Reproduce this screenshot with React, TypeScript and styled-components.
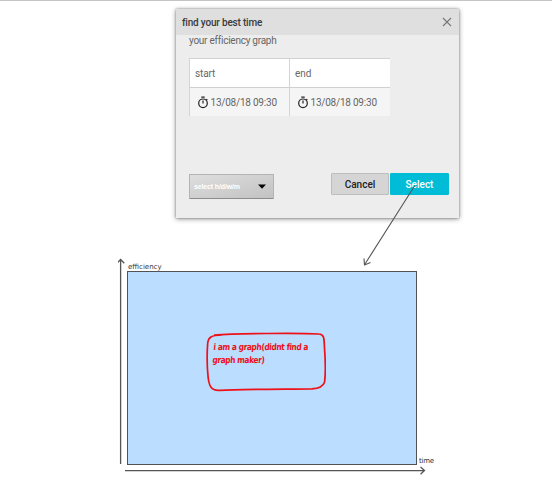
import React from 'react';
import styled, { createGlobalStyle } from 'styled-components';

const GlobalStyle = createGlobalStyle`
  * { box-sizing: border-box; }
  body { margin: 0; background: #fff; }
`;

const Page = styled.main`
  position: relative;
  width: 552px;
  height: 500px;
  overflow: hidden;
  border-top: 1px solid #c4c4c4;
  background: #fff;
  font-family: Roboto, sans-serif;
`;

const Dialog = styled.section`
  width: 283px;
  height: 209px;
  margin: 8px 0 0 176px;
  background: #ededed;
  box-shadow: 0 0 2px rgba(0, 0, 0, 0.35), 0 1px 5px rgba(0, 0, 0, 0.42);
`;

const DialogHeader = styled.header`
  display: flex;
  align-items: center;
  justify-content: space-between;
  height: 26px;
  padding: 0 7px 0 6px;
  background: #dfdfdf;
`;

const Title = styled.h1`
  margin: 1px 0 0;
  font-size: 10px;
  line-height: 14px;
  font-weight: 500;
  letter-spacing: -0.19px;
  color: #3a3a3a;
`;

const CloseButton = styled.button`
  display: flex;
  padding: 0;
  border: 0;
  background: none;
`;

const DialogBody = styled.div`
  padding: 0 10px 0 13px;
`;

const Subtitle = styled.p`
  margin: 0;
  padding-bottom: 11px;
  font-size: 10px;
  line-height: 12px;
  letter-spacing: -0.25px;
  color: #666;
`;

const TimeTable = styled.div`
  display: grid;
  grid-template-columns: 100px 101px;
  grid-template-rows: 29px 28px;
  width: 201px;
  height: 58px;
  border-top: 1px solid #d2d2d2;
`;

const Cell = styled.div<{ $head?: boolean }>`
  display: flex;
  align-items: center;
  gap: 2px;
  padding-left: ${p => (p.$head ? 5 : 6.5)}px;
  border-left: 1px solid #d4d4d4;
  border-bottom: ${p => (p.$head ? '1px solid #d0d0d0' : '0')};
  background: ${p => (p.$head ? '#fff' : '#f5f5f5')};
  color: #666;
  font-size: 10px;
  letter-spacing: ${p => (p.$head ? -0.1 : -0.22)}px;
  white-space: nowrap;
`;

const Actions = styled.footer`
  display: flex;
  align-items: flex-start;
  margin-top: 57px;
`;

const SelectBox = styled.button`
  display: flex;
  align-items: center;
  justify-content: space-between;
  width: 85px;
  height: 25px;
  margin: 1px 57px 0 0;
  padding: 0 7px 0 4px;
  border: 1px solid #b4b4b4;
  border-bottom-color: #8c8c8c;
  border-radius: 1px;
  background: linear-gradient(165deg, #dedede, #c2c2c2);
  color: #fff;
  font: bold 7px 'Liberation Sans', sans-serif;
  letter-spacing: -0.14px;
`;

const Button = styled.button<{ $primary?: boolean }>`
  width: ${p => (p.$primary ? 59 : 58)}px;
  height: 22px;
  margin-right: ${p => (p.$primary ? 0 : 1)}px;
  padding: 0;
  border: 1px solid ${p => (p.$primary ? '#00bcd6' : '#bebebe')};
  border-radius: 1px;
  background: ${p => (p.$primary ? '#00bcd6' : '#d5d5d5')};
  color: ${p => (p.$primary ? '#fff' : '#222')};
  font: 500 10px Roboto, sans-serif;
`;

const Chart = styled.section`
  display: grid;
  grid-template-columns: 9px 290px 40px;
  grid-template-rows: 13px 194px 14px;
  margin: 40px 0 0 118px;
`;

const AxisLabel = styled.div<{ $end?: boolean }>`
  grid-row: ${p => (p.$end ? 2 : 1)};
  grid-column: ${p => (p.$end ? 3 : 2)};
  align-self: end;
  height: 8px;
  padding-left: ${p => (p.$end ? 2 : 1)}px;
  color: #333;
  font: 7px/8px 'DejaVu Sans', sans-serif;
  letter-spacing: ${p => (p.$end ? -0.28 : 0)}px;
`;

const VerticalAxis = styled.svg`
  grid-row: 1 / 3;
  grid-column: 1;
`;

const HorizontalAxis = styled.svg`
  grid-row: 3;
  grid-column: 1 / 4;
`;

const Plot = styled.div`
  grid-row: 2;
  grid-column: 2;
  padding: 60px 0 0 78px;
  border: 1px solid #505356;
  background: #bbddff;
`;

const Note = styled.div`
  position: relative;
  width: 120px;
  height: 60px;
  padding: 9px 0 0 8px;
`;

const NoteOutline = styled.svg`
  position: absolute;
  inset: 0;
`;

const NoteText = styled.p`
  margin: 0;
  color: #ed1018;
  font: bold 9px/13px 'DejaVu Sans Condensed', 'DejaVu Sans', sans-serif;
  letter-spacing: -0.4px;
  white-space: nowrap;
  transform: scaleX(0.91) skewX(-5deg);
  transform-origin: 0 0;
`;

const Connector = styled.svg`
  position: absolute;
  left: 0;
  top: -1px;
  pointer-events: none;
`;

const Stopwatch = () => (
  <svg width="12" height="13" viewBox="0 0 12 13" fill="none" stroke="#222" strokeWidth="1.2">
    <circle cx="6" cy="7.3" r="4.3" />
    <path d="M4.3 1.2h3.4M6 4.5v3M9.3 3.1l1 1" />
  </svg>
);

const App = () => (
  <Page>
    <GlobalStyle />
    <Dialog>
      <DialogHeader>
        <Title>find your best time</Title>
        <CloseButton aria-label="Close">
          <svg width="10" height="10" viewBox="0 0 10 10" stroke="#777" strokeWidth="1.1">
            <path d="M1 1l8 8M9 1L1 9" />
          </svg>
        </CloseButton>
      </DialogHeader>
      <DialogBody>
        <Subtitle>your efficiency graph</Subtitle>
        <TimeTable>
          <Cell $head>start</Cell>
          <Cell $head>end</Cell>
          <Cell><Stopwatch />13/08/18 09:30</Cell>
          <Cell><Stopwatch />13/08/18 09:30</Cell>
        </TimeTable>
        <Actions>
          <SelectBox>
            select h/d/w/m
            <svg width="8" height="5" viewBox="0 0 8 5"><path d="M0 .5h8L4 4.8z" fill="#000" /></svg>
          </SelectBox>
          <Button>Cancel</Button>
          <Button $primary>Select</Button>
        </Actions>
      </DialogBody>
    </Dialog>
    <Chart>
      <VerticalAxis width="9" height="206" fill="none" stroke="#555" strokeWidth="1.3">
        <path d="M2.6 206V2M-1 5.2L2.6 1.5L6.3 5.2" />
      </VerticalAxis>
      <AxisLabel>efficiency</AxisLabel>
      <Plot>
        <Note>
          <NoteOutline width="120" height="60" fill="none" stroke="#ee1118" strokeWidth="1.7">
            <path d="M8 3.2C30 1.5 92 .8 113 2C119 2 118 9 118.5 16C119.4 28 120 38 118.6 50C117 55 112 56.5 106 56.8C74 57.2 34 57.2 14 58.3C4 59 3 52 2.2 46C1 35 1 20 1.7 11C2.4 5 5 3.4 16 3" />
          </NoteOutline>
          <NoteText>
            i am a graph(didnt find a
            <br />
            graph maker)
          </NoteText>
        </Note>
      </Plot>
      <AxisLabel $end>time</AxisLabel>
      <HorizontalAxis width="330" height="14" fill="none" stroke="#555" strokeWidth="1.3">
        <path d="M7 5.6H306M302.5 2L306.5 5.6L302.5 9.3" />
      </HorizontalAxis>
    </Chart>
    <Connector width="552" height="500" fill="none" stroke="#555" strokeWidth="1.1">
      <path d="M414.5 186L365 264M364 258.5L364.5 265L370.5 262.5" />
    </Connector>
  </Page>
);

export default App;
